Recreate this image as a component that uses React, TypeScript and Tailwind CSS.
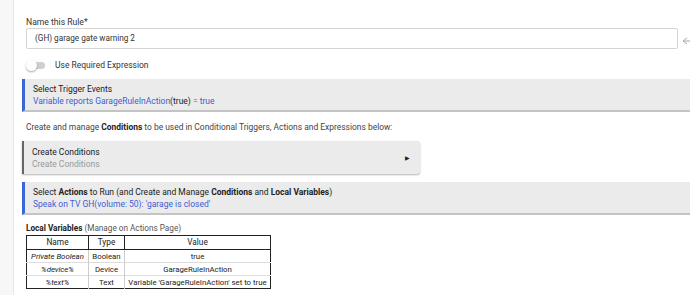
import React from "react";

export default function App() {
  const blue = "text-[#3d5ed6]";
  return (
    <div className="w-[690px] h-[295px] overflow-hidden flex bg-white text-[#222] font-['Roboto',sans-serif]">
      <div className="w-[14px] shrink-0 bg-[#f7f7f7] border-r border-[#e6e6e6]" />
      <div className="flex-1 flex flex-col pl-[8px] pt-[16px]">
        <div className="pl-[4px] h-[12px] text-[8.6px] leading-[12px] text-[#333]">Name this Rule*</div>
        <div className="flex items-center">
          <div className="ml-[4px] w-[652px] h-[21px] border border-[#d4d4d4] rounded-[2px] flex items-center pl-[8px] text-[8.2px] text-[#333]">
            (GH) garage gate warning 2
          </div>
          <svg className="ml-[4px] mt-[4px]" width="10" height="10" viewBox="0 0 10 10">
            <path d="M1 5 L5 2 M1 5 L5 8 M1 5 H9" stroke="#aaa" strokeWidth="1" fill="none" />
          </svg>
        </div>
        <div className="flex items-center mt-[10px] pl-[4px] h-[12px]">
          <div className="relative w-[20px] h-[12px] flex items-center">
            <div className="absolute left-[2px] w-[17px] h-[7px] rounded-full bg-[#cfcfcf]" />
            <div className="absolute left-0 w-[11px] h-[11px] rounded-full bg-white shadow-[0_1px_2px_rgba(0,0,0,0.35)]" />
          </div>
          <span className="ml-[9px] text-[8.5px] text-[#333]">Use Required Expression</span>
        </div>
        <div className="mt-[8px] h-[33px] bg-[#ebebeb] border-l-[3px] border-[#3b66d6] border-b-2 border-b-[#c4c4c4] pl-[8px] flex flex-col justify-center text-[8.5px] leading-[12px]">
          <div className="text-[#222]">Select Trigger Events</div>
          <div className={blue}>
            Variable reports GarageRuleInAction<span className="text-[#222]">(true)</span> = true
          </div>
        </div>
        <div className="mt-[9px] h-[12px] pl-[4px] text-[8.45px] leading-[12px] text-[#444]">
          Create and manage <b className="text-[#222] font-bold">Conditions</b> to be used in Conditional Triggers, Actions and Expressions below:
        </div>
        <div className="mt-[8px] w-[398px] h-[33px] bg-[#ebebeb] border-l-2 border-[#666] rounded-r-[3px] shadow-[0_1px_2px_rgba(0,0,0,0.3)] pl-[8px] pr-[10px] flex items-center">
          <div className="flex-1 flex flex-col text-[8.5px] leading-[12px]">
            <div className="text-[#222]">Create Conditions</div>
            <div className="text-[#999]">Create Conditions</div>
          </div>
          <span className="text-[6px] text-[#222]">▶</span>
        </div>
        <div className="mt-[8px] h-[33px] bg-[#ebebeb] border-l-[3px] border-[#3b66d6] border-b-2 border-b-[#c4c4c4] pl-[8px] flex flex-col justify-center text-[8.5px] leading-[12px]">
          <div className="text-[#222]">
            Select <b>Actions</b> to Run (and Create and Manage <b>Conditions</b> and <b>Local Variables</b>)
          </div>
          <div className={blue}>Speak on TV GH(volume: 50): 'garage is closed'</div>
        </div>
        <div className="mt-[8px] h-[11px] pl-[4px] text-[8.2px] leading-[11px] text-[#555]">
          <b className="text-[#222]">Local Variables</b> (Manage on Actions Page)
        </div>
        <table className="ml-[4px] mt-[1px] w-[245px] border-collapse border-[1.5px] border-[#222] text-[7.8px] leading-[11px] text-[#222] table-fixed">
          <thead>
            <tr className="h-[14px] text-[8.3px]">
              <th className="font-normal border border-[#222] w-[62px] text-center">Name</th>
              <th className="font-normal border border-[#222] w-[36px] text-center">Type</th>
              <th className="font-normal border border-[#222] text-center">Value</th>
            </tr>
          </thead>
          <tbody>
            <tr className="h-[13px]">
              <td className="italic border-r border-[#ccc] text-center whitespace-nowrap">Private Boolean</td>
              <td className="border-r border-[#ccc] text-center">Boolean</td>
              <td className="text-center">true</td>
            </tr>
            <tr className="h-[13px] border-t border-[#ddd]">
              <td className="italic border-r border-[#ccc] text-center">%device%</td>
              <td className="border-r border-[#ccc] text-center">Device</td>
              <td className="text-center">GarageRuleInAction</td>
            </tr>
            <tr className="h-[13px] border-t border-[#ddd]">
              <td className="italic border-r border-[#ccc] text-center">%text%</td>
              <td className="border-r border-[#ccc] text-center">Text</td>
              <td className="text-center whitespace-nowrap">Variable 'GarageRuleInAction' set to true</td>
            </tr>
          </tbody>
        </table>
      </div>
    </div>
  );
}
